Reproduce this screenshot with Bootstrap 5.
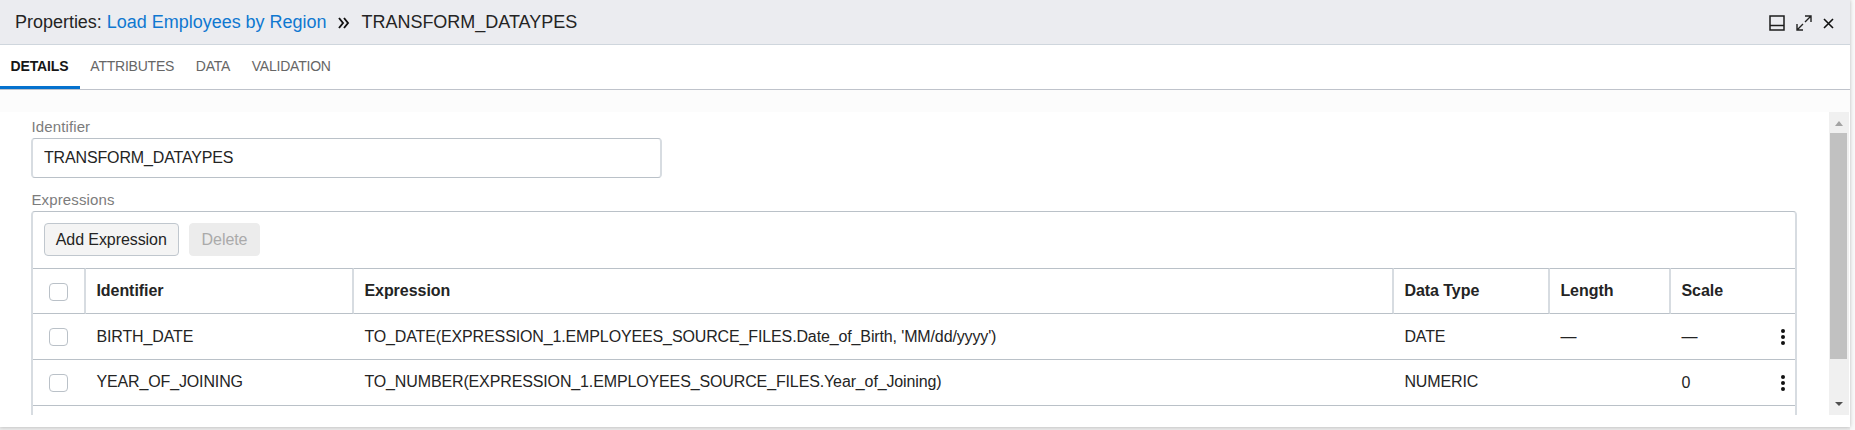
<!DOCTYPE html>
<html lang="en"><head><meta charset="utf-8"><title>Properties</title>
<link rel="stylesheet" href="https://cdn.jsdelivr.net/npm/bootstrap@5.3.0/dist/css/bootstrap.min.css">
<style>
body{font-family:"Liberation Sans",Arial,sans-serif;font-size:16px;line-height:20px;color:#242424;background:#ececec;overflow:hidden;height:430px}
.panel{width:1850px;height:427px;background:#fff;box-shadow:0 0 4px rgba(0,0,0,.25);position:relative}
.edge{background:#f9f9f9;height:430px}
.titlebar{height:45px;background:#ebecf0;border-bottom:1px solid #cfd6dd;padding:0 16.5px 1px 15px;font-size:18px;letter-spacing:-.02px}
.titlebar a{color:#0f78d0}
.chev{margin:3px 11px 0 12px}
.window-tools{margin-top:3px}
.expand{margin:0 11px}
.tabs{height:45px;border-bottom:1px solid #bfc3cb;font-size:14px;letter-spacing:-.22px}
.tabs .nav-link{color:#666;padding:11px 10.8px 0;height:44px;border-bottom:3px solid transparent;line-height:20px}
.tabs .nav-link.active{color:#161616;font-weight:700;border-color:#0572ce;letter-spacing:-.15px;padding-left:10.6px;width:79.5px}
.strip{height:22px;background:#fcfcfc}
.view{height:303px}
.body-pane{padding:5px 0 0 31px;overflow:hidden;width:1829px}
.cap{font-size:15px;color:#7c7c7c;line-height:20px;letter-spacing:.12px;padding-left:.5px}
.field{width:631px;height:40px;margin-top:1px;border:1px solid #bac1c8;border-left:2px solid #d7dce1;border-right:2px solid #d7dce1;border-radius:4px;padding:0 11px;color:#242424;font-size:16px;letter-spacing:-.15px}
.box-cap{margin-top:12px}
.box{width:1766px;height:230px;margin-top:1px;border:1px solid #bac1c8;border-left:2px solid #d7dce1;border-right:2px solid #d7dce1;border-radius:4px 4px 0 0}
.tools{height:56px;padding:11px 0 0 10.5px;gap:10px}
.act{width:135.5px;height:33px;font-size:16px;line-height:20px;letter-spacing:-.08px;padding:0;border-radius:4px;border:1px solid #c0c7ce;background:#f4f4f4;color:#242424}
.act:disabled{width:71px;background:#ececec;border-color:#ececec;color:#aaa;opacity:1}
.grid{table-layout:fixed;border-collapse:separate;border-spacing:0;width:1762px}
.grid th,.grid td{height:46px;padding:0 0 0 10.4px;border-bottom:1px solid #bac1c8;vertical-align:middle;white-space:nowrap}
.grid th{border-top:1px solid #bac1c8;border-right:2px solid #d7dce1;letter-spacing:-.04px}
.grid td{letter-spacing:-.13px}
.grid tbody tr:nth-child(2) td:not(:last-child){padding-bottom:1px}
.grid th:last-child{border-right:0}
.grid .pick{padding-left:16px}
.grid .form-check-input{display:block;width:19px;height:18px;margin:1px 0 0;border:1px solid #bac1c8;border-radius:4px;box-shadow:none}
.track{width:20px;background:#f0f0f0}
.thumb{width:17px;height:226px;margin:2px auto 0 1px;background:#c1c1c1}
</style></head><body class="d-flex">
<div class="panel flex-shrink-0">
<header class="titlebar d-flex align-items-center">
<span>Properties: <a href="#" class="text-decoration-none">Load Employees by Region</a></span>
<svg class="chev" width="12" height="12" viewBox="0 0 12 12" fill="none" stroke="#111" stroke-width="1.9"><path d="M1 1l4 5-4 5M6 1l4 5-4 5"/></svg>
<span>TRANSFORM_DATAYPES</span>
<div class="window-tools ms-auto d-flex align-items-center">
<svg width="16" height="16" viewBox="0 0 16 16" fill="none" stroke="#1c1c1c" stroke-width="1.5"><path d="M1 1h14v14H1zM1 10.5h14"/></svg>
<svg class="expand" width="16" height="16" viewBox="0 0 16 16" fill="none" stroke="#222" stroke-width="1.4"><path d="M9 1h6v6M15 1L9 7M7 15H1V9M1 15l6-6"/></svg>
<svg width="11" height="11" viewBox="0 0 11 11" fill="none" stroke="#111" stroke-width="1.6"><path d="M1 1l9 9M10 1l-9 9"/></svg>
</div></header>
<nav class="tabs nav flex-nowrap"><a class="nav-link active" href="#">DETAILS</a><a class="nav-link" href="#">ATTRIBUTES</a><a class="nav-link" href="#">DATA</a><a class="nav-link" href="#">VALIDATION</a></nav>
<div class="strip"></div>
<div class="view d-flex">
<main class="body-pane flex-shrink-0">
<label class="cap d-block" for="ident">Identifier</label>
<input id="ident" class="field d-block" value="TRANSFORM_DATAYPES">
<div class="cap box-cap">Expressions</div>
<section class="box">
<div class="tools d-flex"><button class="act">Add Expression</button><button class="act" disabled>Delete</button></div>
<table class="grid"><colgroup><col style="width:53px"><col style="width:268px"><col style="width:1040px"><col style="width:156px"><col style="width:121px"><col></colgroup>
<thead><tr><th class="pick"><input class="form-check-input" type="checkbox"></th><th>Identifier</th><th>Expression</th><th>Data Type</th><th>Length</th><th>Scale</th></tr></thead>
<tbody>
<tr><td class="pick"><input class="form-check-input" type="checkbox"></td><td>BIRTH_DATE</td><td>TO_DATE(EXPRESSION_1.EMPLOYEES_SOURCE_FILES.Date_of_Birth, 'MM/dd/yyyy')</td><td>DATE</td><td>—</td><td><div class="d-flex justify-content-between"><span>—</span><svg width="24" height="20"><g fill="#111"><circle cx="12" cy="4" r="2"/><circle cx="12" cy="10" r="2"/><circle cx="12" cy="16" r="2"/></g></svg></div></td></tr>
<tr><td class="pick"><input class="form-check-input" type="checkbox"></td><td>YEAR_OF_JOINING</td><td>TO_NUMBER(EXPRESSION_1.EMPLOYEES_SOURCE_FILES.Year_of_Joining)</td><td>NUMERIC</td><td></td><td><div class="d-flex justify-content-between"><span>0</span><svg width="24" height="20"><g fill="#111"><circle cx="12" cy="4" r="2"/><circle cx="12" cy="10" r="2"/><circle cx="12" cy="16" r="2"/></g></svg></div></td></tr>
</tbody></table>
</section></main>
<div class="track d-flex flex-column"><svg width="20" height="19"><path d="M6 14h8l-4-5z" fill="#a3a3a3"/></svg><div class="thumb"></div><svg class="mt-auto" width="20" height="19"><path d="M6 6h8l-4 4z" fill="#505050"/></svg></div>
</div></div>
<div class="edge flex-fill"></div>
<script src="https://cdn.jsdelivr.net/npm/bootstrap@5.3.0/dist/js/bootstrap.bundle.min.js"></script>
</body></html>
